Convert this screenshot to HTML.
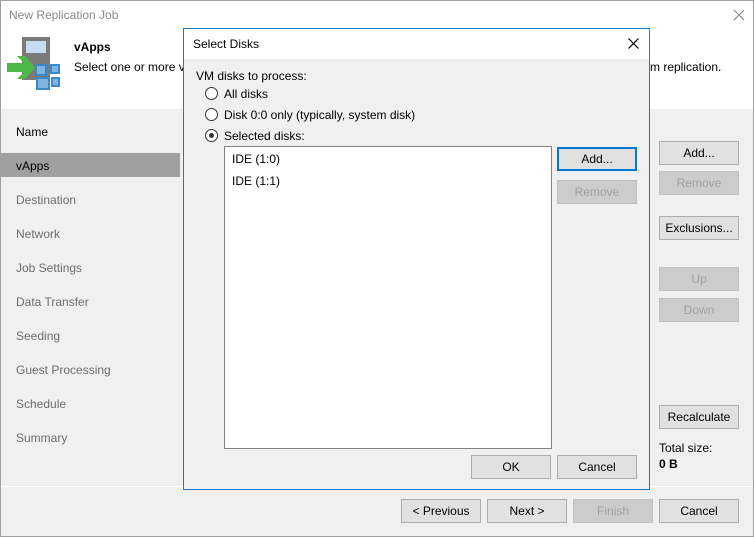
<!DOCTYPE html>
<html><head><style>
*{box-sizing:border-box;margin:0;padding:0}
body{width:754px;height:537px;overflow:hidden;font-family:"Liberation Sans",sans-serif;font-size:12px;color:#000;background:#f0f0f0;position:relative}
.a{position:absolute}
.btn{position:absolute;background:#e1e1e1;border:1px solid #adadad;text-align:center;line-height:22px;font-size:12px;color:#000}
.dis{background:#cccccc;border-color:#bfbfbf;color:#a0a0a0}
.nav{position:absolute;left:16px;font-size:12px;color:#6d6d6d}
.rad{position:absolute;width:13px;height:13px;border:1px solid #333;border-radius:50%;background:#fff}
</style></head><body>
<div class="a" style="left:0;top:0;width:754px;height:537px;border:1px solid #a0a0a0"></div>
<div class="a" style="left:1px;top:1px;width:752px;height:108px;background:#fff"></div>
<div class="a" style="left:9px;top:8px;font-size:12px;color:#8a8a8a">New Replication Job</div>
<svg class="a" style="left:733px;top:9px" width="12" height="12"><path d="M1 1L11 11M11 1L1 11" stroke="#8a8a8a" stroke-width="1.2"/></svg>
<svg class="a" style="left:0;top:30px" width="64" height="64">
<rect x="22" y="7" width="28" height="43" fill="#7a7a7a"/><rect x="26" y="11" width="20" height="12" fill="#c7dcf0"/>
<rect x="36" y="35" width="10" height="10" fill="#7fb3e0" stroke="#3a8ac8" stroke-width="2"/>
<rect x="51" y="35" width="8" height="8" fill="#7fb3e0" stroke="#3a8ac8" stroke-width="2"/>
<rect x="37" y="48" width="12" height="11" fill="#7fb3e0" stroke="#3a8ac8" stroke-width="2"/>
<rect x="52" y="48" width="7" height="8" fill="#7fb3e0" stroke="#3a8ac8" stroke-width="2"/>
<polygon points="7,33 24,33 17,26 25,26 35,37.5 25,49 17,49 24,42 7,42" fill="#4db845"/>
</svg>
<div class="a" style="left:74px;top:40px;font-weight:bold;font-size:12px">vApps</div>
<div class="a" style="left:74px;top:60px">Select one or more v</div>
<div class="a" style="left:650px;top:60px">m replication.</div>
<div class="nav" style="top:125px;color:#000">Name</div>
<div class="a" style="left:1px;top:153px;width:179px;height:24px;background:#a0a0a0"></div>
<div class="nav" style="top:159px;color:#000">vApps</div>
<div class="nav" style="top:193px">Destination</div>
<div class="nav" style="top:227px">Network</div>
<div class="nav" style="top:261px">Job Settings</div>
<div class="nav" style="top:295px">Data Transfer</div>
<div class="nav" style="top:329px">Seeding</div>
<div class="nav" style="top:363px">Guest Processing</div>
<div class="nav" style="top:397px">Schedule</div>
<div class="nav" style="top:431px">Summary</div>
<div class="btn" style="left:659px;top:141px;width:80px;height:24px">Add...</div>
<div class="btn dis" style="left:659px;top:171px;width:80px;height:24px">Remove</div>
<div class="btn" style="left:659px;top:216px;width:80px;height:24px">Exclusions...</div>
<div class="btn dis" style="left:659px;top:267px;width:80px;height:24px">Up</div>
<div class="btn dis" style="left:659px;top:298px;width:80px;height:24px">Down</div>
<div class="btn" style="left:659px;top:405px;width:80px;height:24px">Recalculate</div>
<div class="a" style="left:659px;top:441px">Total size:</div>
<div class="a" style="left:659px;top:457px;font-weight:bold">0 B</div>
<div class="a" style="left:1px;top:486px;width:752px;height:1px;background:#fff"></div>
<div class="btn" style="left:401px;top:499px;width:80px;height:24px">&lt; Previous</div>
<div class="btn" style="left:487px;top:499px;width:80px;height:24px">Next &gt;</div>
<div class="btn dis" style="left:573px;top:499px;width:80px;height:24px">Finish</div>
<div class="btn" style="left:659px;top:499px;width:80px;height:24px">Cancel</div>
<!-- dialog -->
<div class="a" style="left:183px;top:28px;width:467px;height:462px;border:1px solid #1979ca;background:#f0f0f0"></div>
<div class="a" style="left:184px;top:29px;width:465px;height:30px;background:#fff"></div>
<div class="a" style="left:193px;top:37px">Select Disks</div>
<svg class="a" style="left:628px;top:38px" width="11" height="11"><path d="M0.5 0.5L10.5 10.5M10.5 0.5L0.5 10.5" stroke="#000" stroke-width="1.2"/></svg>
<div class="a" style="left:196px;top:69px">VM disks to process:</div>
<div class="rad" style="left:205px;top:87px"></div><div class="a" style="left:224px;top:87px">All disks</div>
<div class="rad" style="left:205px;top:108px"></div><div class="a" style="left:224px;top:108px">Disk 0:0 only (typically, system disk)</div>
<div class="rad" style="left:205px;top:129px"></div><div class="a" style="left:209px;top:133px;width:5px;height:5px;border-radius:50%;background:#333"></div><div class="a" style="left:224px;top:129px">Selected disks:</div>
<div class="a" style="left:224px;top:146px;width:328px;height:303px;background:#fff;border:1px solid #828282"></div>
<div class="a" style="left:232px;top:152px">IDE (1:0)</div>
<div class="a" style="left:232px;top:174px">IDE (1:1)</div>
<div class="btn" style="left:557px;top:147px;width:80px;height:24px;border:2px solid #0078d7;line-height:20px">Add...</div>
<div class="btn dis" style="left:557px;top:180px;width:80px;height:24px">Remove</div>
<div class="btn" style="left:471px;top:455px;width:80px;height:24px">OK</div>
<div class="btn" style="left:557px;top:455px;width:80px;height:24px">Cancel</div>
</body></html>
